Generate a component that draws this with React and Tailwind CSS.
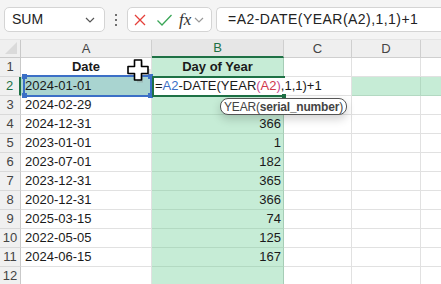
import React from 'react'

const ROWS = [
  ['2024-01-01', ''],
  ['2024-02-29', ''],
  ['2024-12-31', '366'],
  ['2023-01-01', '1'],
  ['2023-07-01', '182'],
  ['2023-12-31', '365'],
  ['2020-12-31', '366'],
  ['2025-03-15', '74'],
  ['2022-05-05', '125'],
  ['2024-06-15', '167'],
]

const grid = 'border-r border-b border-[#e1e1e1]'
const gridB = 'border-r border-b border-[#b3d9c2] bg-[#c6ecd6]'

function Chevron({ className }) {
  return (
    <svg width="10" height="6" viewBox="0 0 10 6" className={className}>
      <path d="M1 1l4 4 4-4" fill="none" stroke="currentColor" strokeWidth="1.2" />
    </svg>
  )
}

function Formula({ second = 'text-[#d0384a]' }) {
  return (
    <>
      <span>=</span>
      <span className="text-[#3b6fc6]">A2</span>
      <span>-DATE(YEAR</span>
      <span className="text-[#c6488f]">(</span>
      <span className={second}>A2</span>
      <span className="text-[#c6488f]">)</span>
      <span>,1,1)+1</span>
    </>
  )
}

function RowHead({ n, active }) {
  return (
    <div
      className={`w-[21px] shrink-0 flex items-center justify-center bg-[#f0f0f0] border-b border-[#d9d9d9] ${
        active ? 'border-r-2 border-r-[#1e7145] text-[#1e7145]' : 'border-r border-r-[#c9c9c9] text-[#444]'
      }`}
    >
      {n}
    </div>
  )
}

export default function App() {
  return (
    <div className="w-[441px] h-[284px] overflow-hidden bg-white relative font-['Liberation_Sans',Arial,sans-serif] text-[13px] text-[#1a1a1a]">
      {/* top bar */}
      <div className="h-[39px] bg-[#f4f4f4] flex items-center pl-[4px]">
        <div className="w-[101px] h-[25px] bg-white rounded-[5px] border border-[#d4d4d4] flex items-center justify-between pl-[7px] pr-[9px] text-[14px] text-[#222]">
          <span>SUM</span>
          <Chevron className="text-[#555]" />
        </div>
        <div className="w-[22px] flex flex-col items-center gap-[3px]">
          <span className="w-[2px] h-[2px] bg-[#444] rounded-full" />
          <span className="w-[2px] h-[2px] bg-[#444] rounded-full" />
          <span className="w-[2px] h-[2px] bg-[#444] rounded-full" />
        </div>
        <div className="w-[85px] h-[25px] bg-white rounded-[5px] border border-[#d4d4d4] flex items-center pl-[5px]">
          <svg width="14" height="14" viewBox="0 0 14 14">
            <path d="M2 2l10 10M12 2L2 12" stroke="#e5403a" strokeWidth="1.3" fill="none" />
          </svg>
          <svg width="17" height="14" viewBox="0 0 17 14" className="ml-[9px]">
            <path d="M1.5 7.5l4.5 4.5 9.5-10" stroke="#3aa657" strokeWidth="1.3" fill="none" />
          </svg>
          <span className="ml-[6px] font-['Liberation_Serif',serif] italic text-[17px] leading-none text-[#333]">fx</span>
          <Chevron className="ml-[3px] text-[#999]" />
        </div>
        <div className="ml-[4px] flex-1 h-[25px] bg-white rounded-l-[5px] border border-r-0 border-[#d4d4d4] flex items-center pl-[11px] text-[14px] tracking-[0.45px] text-[#222]">
          =A2-DATE(YEAR(A2),1,1)+1
        </div>
      </div>

      {/* column headers */}
      <div className="h-[19px] flex bg-[#efefef] text-[13px] text-[#444] border-t border-[#e4e4e4]">
        <div className="w-[21px] shrink-0 border-r border-b border-[#c9c9c9] relative">
          <svg width="12" height="12" viewBox="0 0 12 12" className="absolute right-[3px] bottom-[3px]">
            <path d="M12 0V12H0z" fill="#dadada" />
          </svg>
        </div>
        <div className="w-[131px] shrink-0 flex items-center justify-center border-r border-b border-[#cfcfcf]">A</div>
        <div className="w-[132px] shrink-0 flex items-center justify-center bg-[#e6e6e6] border-r border-[#cfcfcf] border-b-2 border-b-[#1e7145] text-[#1e7145]">B</div>
        <div className="w-[68px] shrink-0 flex items-center justify-center border-r border-b border-[#cfcfcf]">C</div>
        <div className="w-[69px] shrink-0 flex items-center justify-center border-r border-b border-[#cfcfcf]">D</div>
        <div className="flex-1 border-b border-[#cfcfcf]" />
      </div>

      {/* row 1 */}
      <div className="h-[19px] flex">
        <RowHead n={1} />
        <div className={`w-[131px] shrink-0 flex items-center justify-center font-bold ${grid}`}>Date</div>
        <div className={`w-[132px] shrink-0 flex items-center justify-center font-bold ${gridB} border-r-[#a6cdb6]`}>Day of Year</div>
        <div className={`w-[68px] shrink-0 ${grid}`} />
        <div className={`w-[69px] shrink-0 ${grid}`} />
        <div className="flex-1 border-b border-[#e1e1e1]" />
      </div>

      {/* row 2 (editing) */}
      <div className="h-[19px] flex">
        <RowHead n={2} active />
        <div className="w-[131px] shrink-0 flex items-center pl-[4px] bg-[#a9d4d0] border-b border-[#e1e1e1]">2024-01-01</div>
        <div className="w-[200px] shrink-0 flex items-center pl-[3px] bg-white border-b border-[#e1e1e1] border-r border-r-[#e1e1e1] whitespace-nowrap">
          <Formula />
        </div>
        <div className="w-[69px] shrink-0 bg-[#c6ecd6] border-r border-b border-[#b3d9c2]" />
        <div className="flex-1 bg-[#c6ecd6] border-b border-[#b3d9c2]" />
      </div>

      {ROWS.slice(1).map(([d, v], i) => (
        <div key={i} className="h-[19px] flex">
          <RowHead n={i + 3} />
          <div className={`w-[131px] shrink-0 flex items-center pl-[4px] ${grid}`}>{d}</div>
          <div className={`w-[132px] shrink-0 flex items-center justify-end pr-[2px] ${gridB} border-r-[#a6cdb6]`}>{v}</div>
          <div className={`w-[68px] shrink-0 ${grid}`} />
          <div className={`w-[69px] shrink-0 ${grid}`} />
          <div className="flex-1 border-b border-[#e1e1e1]" />
        </div>
      ))}
      <div className="h-[19px] flex">
        <RowHead n={12} />
        <div className={`w-[131px] shrink-0 ${grid}`} />
        <div className={`w-[132px] shrink-0 ${gridB} border-r-[#a6cdb6]`} />
        <div className={`w-[68px] shrink-0 ${grid}`} />
        <div className={`w-[69px] shrink-0 ${grid}`} />
        <div className="flex-1" />
      </div>

      {/* A2 reference range border */}
      <div className="absolute left-[23px] top-[75px] w-[129px] h-[22px] border-2 border-[#3b6fc6] pointer-events-none">
        <span className="absolute -left-[3px] -top-[3px] w-[5px] h-[5px] bg-[#3b6fc6]" />
        <span className="absolute -right-[3px] -top-[3px] w-[5px] h-[5px] bg-[#3b6fc6]" />
        <span className="absolute -left-[3px] -bottom-[3px] w-[5px] h-[5px] bg-[#3b6fc6]" />
        <span className="absolute -right-[3px] -bottom-[3px] w-[5px] h-[5px] bg-[#3b6fc6]" />
      </div>

      {/* active cell border B2 */}
      <div className="absolute left-[152px] top-[76px] w-[133px] h-[21px] border-t-2 border-b-2 border-l-2 border-[#1e7145] pointer-events-none">
        <span className="absolute right-[-1px] -bottom-[3px] w-[4px] h-[4px] bg-[#1e7145]" />
      </div>

      {/* function tooltip */}
      <div className="absolute left-[220px] top-[98px] w-[127px] h-[17px] flex items-center justify-center rounded-[8px] border-[1.5px] border-[#555] bg-white text-[12px] tracking-[-0.2px] text-[#444] shadow-[0_4px_10px_rgba(0,0,0,0.18)] whitespace-nowrap">
        <span>YEAR(</span>
        <span className="font-bold">serial_number</span>
        <span>)</span>
      </div>

      {/* cell-select cursor */}
      <svg width="24" height="24" viewBox="0 0 24 24" className="absolute left-[127px] top-[59px]">
        <path d="M8.5 1h6v7.5H22v6h-7.5V22h-6v-7.5H1v-6h7.5z" fill="#888" opacity="0.35" transform="translate(1.5 1.5)" />
        <path d="M7.5 1h7v6.5H21v7h-6.5V21h-7v-6.5H1v-7h6.5z" fill="#fff" stroke="#000" strokeWidth="1.6" strokeLinejoin="round" />
      </svg>
    </div>
  )
}
